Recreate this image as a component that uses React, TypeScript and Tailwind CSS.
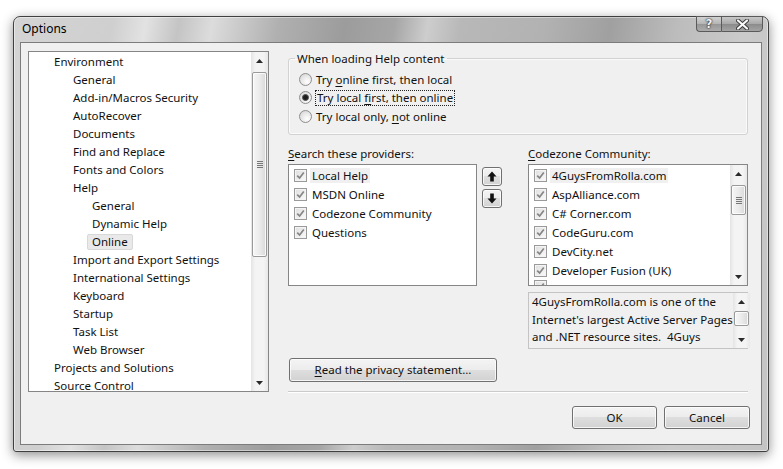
import React from "react";

const F = "font-['Noto_Sans',sans-serif] text-[11.5px] text-[#111]";

function Arrow({ dir }: { dir: "up" | "down" }) {
  return (
    <svg width="7" height="4" viewBox="0 0 7 4">
      {dir === "up" ? (
        <path d="M0 4 L3.5 0 L7 4 Z" fill="#2a2a2a" />
      ) : (
        <path d="M0 0 L7 0 L3.5 4 Z" fill="#2a2a2a" />
      )}
    </svg>
  );
}

function Grip() {
  return (
    <div className="flex flex-col gap-[1px] items-center">
      <div className="w-[6px] h-px bg-[#777]" />
      <div className="w-[6px] h-px bg-[#777]" />
      <div className="w-[6px] h-px bg-[#777]" />
      <div className="w-[6px] h-px bg-[#777]" />
    </div>
  );
}

function VScroll({ thumb, grip }: { thumb: string; grip?: boolean }) {
  return (
    <div className="w-[17px] h-full shrink-0 flex flex-col bg-[linear-gradient(to_right,#e4e4e4,#f4f4f4_25%,#f4f4f4_75%,#e8e8e8)]">
      <div className="h-[17px] shrink-0 flex items-center justify-center">
        <Arrow dir="up" />
      </div>
      <div className="flex-1 flex flex-col">
        <div
          className={
            "mx-[1px] rounded-[2px] border border-[#9a9a9a] bg-[linear-gradient(to_right,#f6f6f6,#ebebeb_50%,#d9d9d9)] shadow-[inset_0_0_0_1px_rgba(255,255,255,0.8)] flex items-center justify-center " +
            thumb
          }
        >
          {grip && <Grip />}
        </div>
      </div>
      <div className="h-[17px] shrink-0 flex items-center justify-center">
        <Arrow dir="down" />
      </div>
    </div>
  );
}

function Check() {
  return (
    <span className="w-[13px] h-[13px] shrink-0 border border-[#9a9a9a] bg-[linear-gradient(135deg,#dedede,#fbfbfb)] flex items-center justify-center shadow-[inset_0_0_0_1px_#f4f4f4]">
      <svg width="9" height="9" viewBox="0 0 9 9">
        <path d="M1.2 4.6 L3.6 7 L7.8 1.4" stroke="#858585" strokeWidth="1.7" fill="none" />
      </svg>
    </span>
  );
}

function Radio({ checked }: { checked?: boolean }) {
  return (
    <span className="w-[13px] h-[13px] shrink-0 rounded-full border border-[#8e8e8e] bg-[radial-gradient(circle_at_65%_70%,#ffffff,#e6e6e6_55%,#cfcfcf)] flex items-center justify-center">
      {checked && <span className="w-[7px] h-[7px] rounded-full bg-[#1e1e1e] border border-[#555]" />}
    </span>
  );
}

const btn =
  "border border-[#707070] rounded-[3px] bg-[linear-gradient(to_bottom,#f4f4f4_0%,#ececec_48%,#dedede_50%,#d2d2d2_100%)] shadow-[inset_0_0_0_1px_rgba(255,255,255,0.75)] flex items-center justify-center";

const tree: [string, number][] = [
  ["Environment", 0],
  ["General", 1],
  ["Add-in/Macros Security", 1],
  ["AutoRecover", 1],
  ["Documents", 1],
  ["Find and Replace", 1],
  ["Fonts and Colors", 1],
  ["Help", 1],
  ["General", 2],
  ["Dynamic Help", 2],
  ["Online", 2],
  ["Import and Export Settings", 1],
  ["International Settings", 1],
  ["Keyboard", 1],
  ["Startup", 1],
  ["Task List", 1],
  ["Web Browser", 1],
  ["Projects and Solutions", 0],
  ["Source Control", 0],
];

const indent = ["pl-[25px]", "pl-[44px]", "pl-[63px]"];

const providers = ["Local Help", "MSDN Online", "Codezone Community", "Questions"];
const community = [
  "4GuysFromRolla.com",
  "AspAlliance.com",
  "C# Corner.com",
  "CodeGuru.com",
  "DevCity.net",
  "Developer Fusion (UK)",
];

export default function App() {
  return (
    <div className={"w-[783px] h-[469px] bg-white pt-[16px] pl-[13px] " + F}>
      <div className="w-[756px] h-[436px] rounded-t-[7px] rounded-b-[3px] border border-[#404040] bg-[linear-gradient(100deg,#d4d4d4_0%,#cfcfcf_12%,#e2e2e2_16%,#c4c4c4_20%,#dcdcdc_24%,#b0b0b0_32%,#9c9c9c_40%,#a6a6a6_46%,#cdcdcd_50%,#b8b8b8_54%,#b2b2b2_64%,#a0a0a0_72%,#bcbcbc_80%,#cacaca_88%,#c4c4c4_100%)] shadow-[inset_0_0_0_1px_rgba(255,255,255,0.45),0_3px_12px_rgba(0,0,0,0.45)] flex flex-col px-[6px] pb-[6px]">
        {/* title bar */}
        <div className="h-[25px] shrink-0 flex items-start justify-between">
          <div className="pl-[2px] pt-[4px] text-[12px] leading-[16px] text-black">Options</div>
          <div className="flex -mt-[1px] -mr-[1px]">
            <div className="w-[25px] h-[16px] border border-[#5a5a5a] border-r-0 rounded-bl-[4px] bg-[linear-gradient(to_bottom,#d2d2d2,#b4b4b4_50%,#969696_50%,#acacac)] flex items-center justify-center">
              <span className="font-['DejaVu_Sans',sans-serif] font-bold text-[12px] leading-[12px] text-[#f4f4f4] [text-shadow:0_0_1px_#000,0_0_2px_#222]">?</span>
            </div>
            <div className="w-[42px] h-[16px] border border-[#5a5a5a] rounded-br-[4px] bg-[linear-gradient(to_bottom,#c8c8c8,#a8a8a8_50%,#8a8a8a_50%,#a4a4a4)] flex items-center justify-center">
              <svg width="13" height="11" viewBox="0 0 13 11">
                <path d="M2 1.5 L11 9.5 M11 1.5 L2 9.5" stroke="#3a3a3a" strokeWidth="4" strokeLinecap="round" />
                <path d="M2 1.5 L11 9.5 M11 1.5 L2 9.5" stroke="#fafafa" strokeWidth="2.2" strokeLinecap="round" />
              </svg>
            </div>
          </div>
        </div>

        {/* client */}
        <div className="flex-1 border border-[#7c7c7c] bg-[#f0f0f0] flex pl-[7px] pt-[8px]">
          {/* tree */}
          <div className="w-[241px] h-[341px] shrink-0 border border-[#868686] bg-white flex">
            <div className="flex-1 pt-[1px]">
              {tree.map(([t, l], i) => (
                <div key={i} className={"h-[18px] leading-[18px] whitespace-nowrap " + indent[l]}>
                  {t === "Online" ? (
                    <span className="inline-block -ml-[5px] px-[4px] h-[16px] leading-[14px] bg-[#e9e9e9] border border-[#d8d8d8] rounded-[2px]">
                      Online
                    </span>
                  ) : (
                    t
                  )}
                </div>
              ))}
            </div>
            <VScroll thumb="mt-[3px] h-[185px]" grip />
          </div>

          {/* right column */}
          <div className="ml-[19px] w-[460px] flex flex-col">
            <fieldset className="h-[84px] border border-[#d2d2d2] rounded-[3px] shadow-[inset_0_0_0_1px_#fafafa]">
              <legend className="ml-[6px] px-[2px] leading-[15px]">When loading Help content</legend>
              <div className="pt-[4px] pl-[10px]">
                <div className="h-[18.5px] flex items-center gap-[4px]">
                  <Radio />
                  <span>
                    Try <u className="underline-offset-2">o</u>nline first, then local
                  </span>
                </div>
                <div className="h-[18.5px] flex items-center gap-[3px]">
                  <Radio checked />
                  <span className="border border-dotted border-[#222] px-[1px] leading-[14px]">
                    Try local <u className="underline-offset-2">f</u>irst, then online
                  </span>
                </div>
                <div className="h-[18.5px] flex items-center gap-[4px]">
                  <Radio />
                  <span>
                    Try local only, <u className="underline-offset-2">n</u>ot online
                  </span>
                </div>
              </div>
            </fieldset>

            <div className="mt-[11px] flex items-start">
              <div className="w-[189px] flex flex-col">
                <div className="h-[15px] leading-[15px] mb-[3px]">
                  <u className="underline-offset-2">S</u>earch these providers:
                </div>
                <div className="h-[122px] border border-[#868686] bg-white pt-[1px] pl-[5px]">
                  {providers.map((p, i) => (
                    <div key={i} className="h-[19px] flex items-center gap-[3px]">
                      <Check />
                      <span className={"px-[2px] leading-[15px] " + (i === 0 ? "bg-[#f0f0f0]" : "")}>{p}</span>
                    </div>
                  ))}
                </div>
              </div>
              <div className="ml-[5px] pt-[21px] flex flex-col gap-[3px]">
                <div className={"w-[20px] h-[19px] " + btn}>
                  <svg width="10" height="11" viewBox="0 0 10 11">
                    <path d="M5 0.5 L9.5 5.5 L6.8 5.5 L6.8 10.5 L3.2 10.5 L3.2 5.5 L0.5 5.5 Z" fill="#111" />
                  </svg>
                </div>
                <div className={"w-[20px] h-[19px] " + btn}>
                  <svg width="10" height="11" viewBox="0 0 10 11">
                    <path d="M5 10.5 L9.5 5.5 L6.8 5.5 L6.8 0.5 L3.2 0.5 L3.2 5.5 L0.5 5.5 Z" fill="#111" />
                  </svg>
                </div>
              </div>
              <div className="ml-auto w-[220px] flex flex-col">
                <div className="h-[15px] leading-[15px] mb-[3px]">
                  <u className="underline-offset-2">C</u>odezone Community:
                </div>
                <div className="h-[122px] border border-[#868686] bg-white flex overflow-hidden">
                  <div className="flex-1 pt-[1px] pl-[5px]">
                    {community.map((p, i) => (
                      <div key={i} className="h-[19px] flex items-center gap-[3px] whitespace-nowrap">
                        <Check />
                        <span className={"px-[2px] leading-[15px] " + (i === 0 ? "bg-[#f0f0f0]" : "")}>{p}</span>
                      </div>
                    ))}
                    <div className="h-[19px] flex items-start">
                      <Check />
                    </div>
                  </div>
                  <VScroll thumb="mt-[3px] h-[30px]" grip />
                </div>
                <div className="mt-[6px] h-[57px] border border-[#c4c4c4] bg-[#f0f0f0] flex">
                  <div className="flex-1 pl-[3px] leading-[17.5px] whitespace-nowrap">
                    4GuysFromRolla.com is one of the
                    <br />
                    Internet's largest Active Server Pages
                    <br />
                    and .NET resource sites.&nbsp; 4Guys
                  </div>
                  <VScroll thumb="mt-[1px] h-[15px]" />
                </div>
              </div>
            </div>

            <div className={"mt-[9px] ml-[1px] w-[208px] h-[24px] " + btn}>
              <span>
                <u className="underline-offset-2">R</u>ead the privacy statement...
              </span>
            </div>

            <div className="mt-[9px] h-px bg-[#cbcbcb]" />
            <div className="h-px bg-white" />

            <div className="mt-[13px] flex justify-end gap-[7px] -mr-[2px]">
              <div className={"w-[85px] h-[23px] " + btn}>OK</div>
              <div className={"w-[86px] h-[23px] " + btn}>Cancel</div>
            </div>
          </div>
        </div>
      </div>
    </div>
  );
}
